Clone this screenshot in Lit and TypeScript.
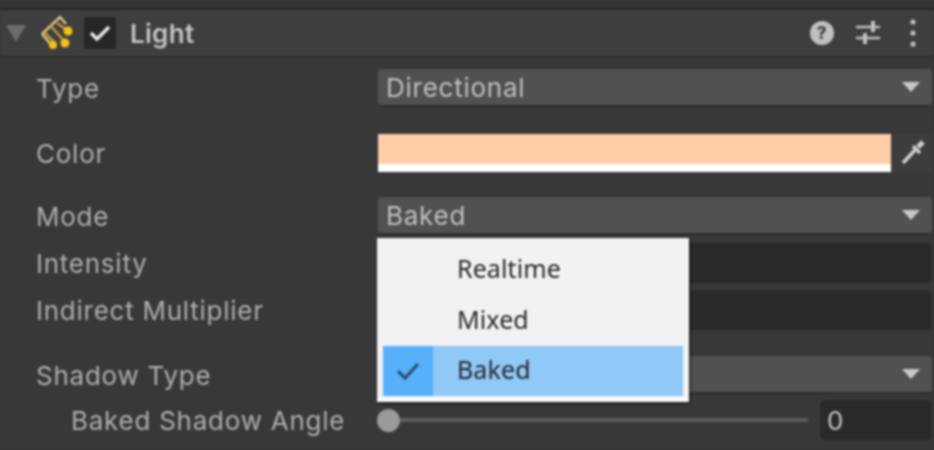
import { LitElement, html, css } from "lit";
import { customElement } from "lit/decorators.js";

@customElement("app-root")
export class AppRoot extends LitElement {
  static styles = css`
    :host { display: block; width: 934px; height: 450px; overflow: hidden; background: #383838; }
    .root { position: relative; width: 934px; height: 450px; background: #383838; filter: blur(0.9px); font-family: Inter, "Liberation Sans", sans-serif; font-size: 26px; letter-spacing: 0.75px; color: #aeaeae; overflow: hidden; }
    .top { height: 8px; background: #353535; border-bottom: 2px solid #252525; }
    .header { height: 46px; background: #3e3e3e; border-bottom: 2px solid #2e2e2e; display: flex; align-items: center; padding: 0 17px 0 6px; }
    .tri { width: 0; height: 0; border-left: 10px solid transparent; border-right: 10px solid transparent; border-top: 17px solid #6b6b6b; }
    .lighticon { margin-left: 14px; width: 38px; height: 38px; }
    .check { margin-left: 6px; width: 32px; height: 32px; background: #262626; border-radius: 3px; display: flex; align-items: center; justify-content: center; }
    .title { margin-left: 14px; font-weight: 600; letter-spacing: 0.3px; color: #c4c4c4; flex: 1; }
    .hicons { display: flex; align-items: center; gap: 22px; }
    .dots { margin-left: 7px; }
    .rows { display: flex; flex-direction: column; padding: 11px 2px 0 36px; }
    .row { display: grid; grid-template-columns: 342px 1fr; align-items: center; height: 38px; }
    .row.gap-l { margin-top: 27px; }
    .row.gap-m { margin-top: 25px; }
    .row.gap-s { margin-top: 26px; }
    .row.field { height: 40px; margin-top: 7px; }
    .row.field.first { margin-top: 8px; }
    .row.sub { height: 40px; margin-top: 6px; }
    .sub .label { padding-left: 35px; }
    .dd { height: 38px; box-sizing: border-box; background: #515151; border-radius: 4px; border-bottom: 2px solid #2e2e2e; display: flex; align-items: center; justify-content: space-between; padding: 0 12px 0 8px; color: #c0c0c0; }
    .arrow { width: 0; height: 0; border-left: 9px solid transparent; border-right: 9px solid transparent; border-top: 10px solid #c8c8c8; }
    .color { display: flex; height: 38px; }
    .swatch { flex: 1; background: #ffcda8; display: flex; flex-direction: column; justify-content: flex-end; }
    .alpha { height: 8px; background: #fff; }
    .pick { width: 41px; background: #3d3d3d; border-radius: 0 4px 4px 0; display: flex; align-items: center; justify-content: center; }
    .input { height: 40px; box-sizing: border-box; background: #2a2a2a; border-radius: 5px; }
    .slider { display: flex; align-items: center; }
    .thumb { width: 23px; height: 23px; border-radius: 50%; background: #9a9a9a; margin-left: -1px; }
    .track { flex: 1; height: 4px; background: #5c5c5c; margin-right: 12px; }
    .num { width: 112px; height: 40px; box-sizing: border-box; background: #2a2a2a; border-radius: 5px; padding-left: 7px; display: flex; align-items: center; color: #c4c4c4; }
    .menu { position: absolute; left: 377px; top: 238px; width: 312px; height: 164px; box-sizing: border-box; background: #f2f2f2; border-bottom: 4px solid #fbfbfb; box-shadow: 1px 1px 3px rgba(0,0,0,.7); padding: 6px; font-family: "Noto Sans", sans-serif; font-size: 25px; letter-spacing: 0.1px; color: #26282e; display: flex; flex-direction: column; }
    .item { height: 51px; display: flex; align-items: center; flex: none; }
    .item.sel { height: 50px; background: #90c8f6; }
    .mark { width: 50px; height: 100%; flex: none; display: flex; align-items: center; justify-content: center; margin-right: 24px; }
    .sel .mark { background: #56b0fa; }
    .txt { padding-bottom: 4px; }
  `;

  render() {
    return html`
      <div class="root">
        <div class="top"></div>
        <div class="header">
          <div class="tri"></div>
          <svg class="lighticon" viewBox="0 0 38 38" fill="none">
            <path d="M2 20 L20 3 L26 10" stroke="#d8c48c" stroke-width="2.5"/>
            <path d="M2 20 L13 33" stroke="#d8c48c" stroke-width="2.5"/>
            <path d="M10 11 L25 28 M5 19 L15 29 M17 9 L28 17" stroke="#c89a3c" stroke-width="2.5"/>
            <circle cx="28" cy="17" r="4.5" fill="#f2c21a"/>
            <circle cx="25" cy="29" r="4.5" fill="#f2c21a"/>
            <circle cx="13" cy="31" r="4" fill="#f2c21a"/>
          </svg>
          <div class="check">
            <svg width="22" height="18" viewBox="0 0 22 18" fill="none"><path d="M2 9 L8 15 L20 3" stroke="#e8e8e8" stroke-width="3.5"/></svg>
          </div>
          <div class="title">Light</div>
          <div class="hicons">
            <svg width="24" height="24" viewBox="0 0 24 24"><circle cx="12" cy="12" r="12" fill="#c0c0c0"/><text x="12" y="18" text-anchor="middle" font-family="Inter, sans-serif" font-weight="800" font-size="17" fill="#3e3e3e">?</text></svg>
            <svg width="24" height="24" viewBox="0 0 24 24" fill="none" stroke="#c0c0c0" stroke-width="2.5"><path d="M0 6H24M0 17H24"/><path d="M17 0V11M9 12V23" stroke-width="4"/></svg>
            <svg class="dots" width="8" height="30" viewBox="0 0 8 30" fill="#c0c0c0"><circle cx="4" cy="4" r="2.6"/><circle cx="4" cy="15" r="2.6"/><circle cx="4" cy="26" r="2.6"/></svg>
          </div>
        </div>
        <div class="rows">
          <div class="row"><div class="label">Type</div><div class="dd">Directional<span class="arrow"></span></div></div>
          <div class="row gap-l"><div class="label">Color</div>
            <div class="color">
              <div class="swatch"><div class="alpha"></div></div>
              <div class="pick"><svg width="30" height="30" viewBox="0 0 30 30" fill="none"><path d="M6 25 L18 12" stroke="#cfcfcf" stroke-width="3.5"/><path d="M16 8 L23 15" stroke="#cfcfcf" stroke-width="3.5"/><path d="M21 9 L26 4" stroke="#cfcfcf" stroke-width="5"/></svg></div>
            </div>
          </div>
          <div class="row gap-m"><div class="label">Mode</div><div class="dd">Baked<span class="arrow"></span></div></div>
          <div class="row field first"><div class="label">Intensity</div><div class="input"></div></div>
          <div class="row field"><div class="label">Indirect Multiplier</div><div class="input"></div></div>
          <div class="row gap-s"><div class="label">Shadow Type</div><div class="dd"><span></span><span class="arrow"></span></div></div>
          <div class="row sub"><div class="label">Baked Shadow Angle</div>
            <div class="slider"><div class="thumb"></div><div class="track"></div><div class="num">0</div></div>
          </div>
        </div>
        <div class="menu">
          <div class="item"><div class="mark"></div><span class="txt">Realtime</span></div>
          <div class="item"><div class="mark"></div><span class="txt">Mixed</span></div>
          <div class="item sel"><div class="mark"><svg width="24" height="20" viewBox="0 0 24 20" fill="none"><path d="M2 10 L9 17 L22 3" stroke="#2a4a6a" stroke-width="3"/></svg></div><span class="txt">Baked</span></div>
        </div>
      </div>`;
  }
}
